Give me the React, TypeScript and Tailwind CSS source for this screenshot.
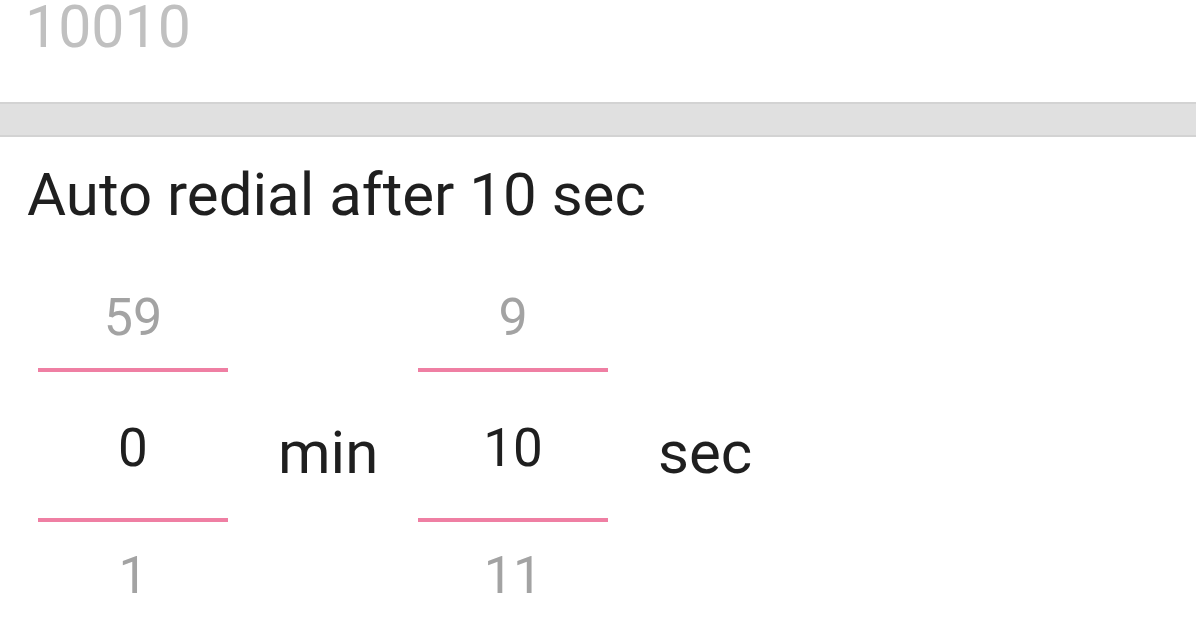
import React from "react";

interface PickerProps {
  prev: string;
  value: string;
  next: string;
}

// Android style NumberPicker: faded neighbours, pink selection dividers
const NumberPicker: React.FC<PickerProps> = ({ prev, value, next }) => {
  return (
    <div className="flex w-[190px] flex-col items-stretch">
      <div className="flex h-[100px] items-center justify-center text-[52px] leading-none text-[#a3a3a3]">
        {prev}
      </div>
      <div className="h-[4px] bg-[#ef7fa3]" />
      <div className="flex h-[146px] items-center justify-center pt-[6px] text-[53px] leading-none text-[#1f1f1f]">
        {value}
      </div>
      <div className="h-[4px] bg-[#ef7fa3]" />
      <div className="flex h-[108px] items-center justify-center text-[52px] leading-none text-[#a3a3a3]">
        {next}
      </div>
    </div>
  );
};

const Label: React.FC<{ text: string }> = ({ text }) => (
  <div className="flex w-[190px] items-center pl-[50px] pt-[8px] text-[60px] leading-none text-[#1f1f1f]">
    {text}
  </div>
);

export default function App() {
  return (
    <div className="h-[628px] w-[1196px] overflow-hidden bg-white font-['Roboto',sans-serif]">
      {/* previous field value */}
      <div className="pl-[25px] text-[59px] leading-[53px] text-[#c0c0c0]">
        10010
      </div>

      {/* section divider */}
      <div className="mt-[49px] h-[35px] border-y-2 border-[#d3d3d3] bg-[#e0e0e0]" />

      <div className="mt-[28px] pl-[27px] text-[60px] leading-none text-[#1f1f1f]">
        Auto redial after 10 sec
      </div>

      <div className="mt-[43px] flex pl-[38px]">
        <NumberPicker prev="59" value="0" next="1" />
        <Label text="min" />
        <NumberPicker prev="9" value="10" next="11" />
        <Label text="sec" />
      </div>
    </div>
  );
}
